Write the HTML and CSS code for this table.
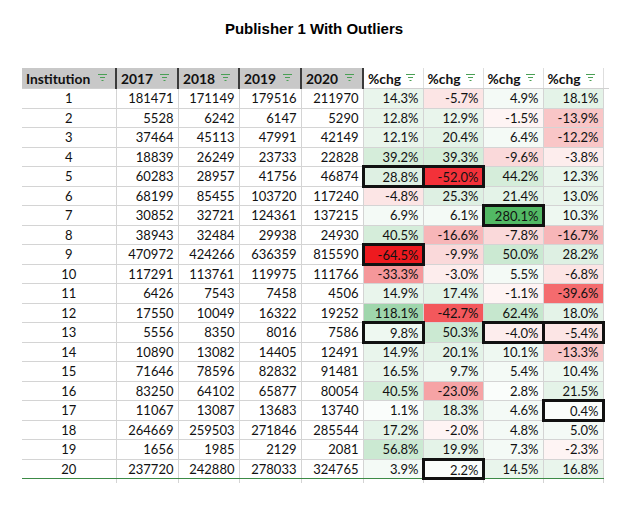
FILE: index.html
```html
<!DOCTYPE html>
<html>
<head>
<meta charset="utf-8">
<link rel="stylesheet" href="styles.css">
</head>
<body>
<h1 class="title">Publisher 1 With Outliers</h1>
<div class="sheet">
<table class="grid">
<colgroup>
<col class="c-inst"><col class="c-y17"><col class="c-y18"><col class="c-y19"><col class="c-y20">
<col class="c-p"><col class="c-p"><col class="c-p"><col class="c-p"><col class="c-edge">
</colgroup>
<thead>
<tr>
<th class="hg"><span class="hl">Institution</span><svg class="flt" viewBox="0 0 9 7"><path d="M0 0.5H9M2 3.5H7M3.5 6.5H5.5"/></svg></th>
<th class="hg"><span class="hl">2017</span><svg class="flt" viewBox="0 0 9 7"><path d="M0 0.5H9M2 3.5H7M3.5 6.5H5.5"/></svg></th>
<th class="hg"><span class="hl">2018</span><svg class="flt" viewBox="0 0 9 7"><path d="M0 0.5H9M2 3.5H7M3.5 6.5H5.5"/></svg></th>
<th class="hg"><span class="hl">2019</span><svg class="flt" viewBox="0 0 9 7"><path d="M0 0.5H9M2 3.5H7M3.5 6.5H5.5"/></svg></th>
<th class="hg"><span class="hl">2020</span><svg class="flt" viewBox="0 0 9 7"><path d="M0 0.5H9M2 3.5H7M3.5 6.5H5.5"/></svg></th>
<th class="hw"><span class="hl">%chg</span><svg class="flt" viewBox="0 0 9 7"><path d="M0 0.5H9M2 3.5H7M3.5 6.5H5.5"/></svg></th>
<th class="hw"><span class="hl">%chg</span><svg class="flt" viewBox="0 0 9 7"><path d="M0 0.5H9M2 3.5H7M3.5 6.5H5.5"/></svg></th>
<th class="hw"><span class="hl">%chg</span><svg class="flt" viewBox="0 0 9 7"><path d="M0 0.5H9M2 3.5H7M3.5 6.5H5.5"/></svg></th>
<th class="hw"><span class="hl">%chg</span><svg class="flt" viewBox="0 0 9 7"><path d="M0 0.5H9M2 3.5H7M3.5 6.5H5.5"/></svg></th>
<th class="he"><span class="edge-mark"></span></th>
</tr>
</thead>
<tbody>
<tr><td class="inst">1</td><td>181471</td><td>171149</td><td>179516</td><td>211970</td><td class="g3">14.3%</td><td class="r2">-5.7%</td><td class="g1">4.9%</td><td class="g4">18.1%</td><td class="ex"></td></tr>
<tr><td class="inst">2</td><td>5528</td><td>6242</td><td>6147</td><td>5290</td><td class="g3">12.8%</td><td class="g3">12.9%</td><td class="r0">-1.5%</td><td class="r4">-13.9%</td><td class="ex"></td></tr>
<tr><td class="inst">3</td><td>37464</td><td>45113</td><td>47991</td><td>42149</td><td class="g3">12.1%</td><td class="g4">20.4%</td><td class="g1">6.4%</td><td class="r4">-12.2%</td><td class="ex"></td></tr>
<tr><td class="inst">4</td><td>18839</td><td>26249</td><td>23733</td><td>22828</td><td class="g6">39.2%</td><td class="g6">39.3%</td><td class="r3">-9.6%</td><td class="r1">-3.8%</td><td class="ex"></td></tr>
<tr><td class="inst">5</td><td>60283</td><td>28957</td><td>41756</td><td>46874</td><td class="g5 box">28.8%</td><td class="r10 box">-52.0%</td><td class="g6">44.2%</td><td class="g3">12.3%</td><td class="ex"></td></tr>
<tr><td class="inst">6</td><td>68199</td><td>85455</td><td>103720</td><td>117240</td><td class="r2">-4.8%</td><td class="g5">25.3%</td><td class="g4">21.4%</td><td class="g3">13.0%</td><td class="ex"></td></tr>
<tr><td class="inst">7</td><td>30852</td><td>32721</td><td>124361</td><td>137215</td><td class="g1">6.9%</td><td class="g1">6.1%</td><td class="g10 box">280.1%</td><td class="g2">10.3%</td><td class="ex"></td></tr>
<tr><td class="inst">8</td><td>38943</td><td>32484</td><td>29938</td><td>24930</td><td class="g6">40.5%</td><td class="r5">-16.6%</td><td class="r3">-7.8%</td><td class="r5">-16.7%</td><td class="ex"></td></tr>
<tr><td class="inst">9</td><td>470972</td><td>424266</td><td>636359</td><td>815590</td><td class="r11 box">-64.5%</td><td class="r3">-9.9%</td><td class="g7">50.0%</td><td class="g5">28.2%</td><td class="ex"></td></tr>
<tr><td class="inst">10</td><td>117291</td><td>113761</td><td>119975</td><td>111766</td><td class="r7">-33.3%</td><td class="r1">-3.0%</td><td class="g1">5.5%</td><td class="r2">-6.8%</td><td class="ex"></td></tr>
<tr><td class="inst">11</td><td>6426</td><td>7543</td><td>7458</td><td>4506</td><td class="g3">14.9%</td><td class="g4">17.4%</td><td class="r0">-1.1%</td><td class="r8">-39.6%</td><td class="ex"></td></tr>
<tr><td class="inst">12</td><td>17550</td><td>10049</td><td>16322</td><td>19252</td><td class="g9">118.1%</td><td class="r9">-42.7%</td><td class="g8">62.4%</td><td class="g4">18.0%</td><td class="ex"></td></tr>
<tr><td class="inst">13</td><td>5556</td><td>8350</td><td>8016</td><td>7586</td><td class="g2 box">9.8%</td><td class="g7">50.3%</td><td class="r1 box">-4.0%</td><td class="r2 box">-5.4%</td><td class="ex"></td></tr>
<tr><td class="inst">14</td><td>10890</td><td>13082</td><td>14405</td><td>12491</td><td class="g3">14.9%</td><td class="g4">20.1%</td><td class="g2">10.1%</td><td class="r4">-13.3%</td><td class="ex"></td></tr>
<tr><td class="inst">15</td><td>71646</td><td>78596</td><td>82832</td><td>91481</td><td class="g3">16.5%</td><td class="g2">9.7%</td><td class="g1">5.4%</td><td class="g2">10.4%</td><td class="ex"></td></tr>
<tr><td class="inst">16</td><td>83250</td><td>64102</td><td>65877</td><td>80054</td><td class="g6">40.5%</td><td class="r6">-23.0%</td><td class="g0">2.8%</td><td class="g4">21.5%</td><td class="ex"></td></tr>
<tr><td class="inst">17</td><td>11067</td><td>13087</td><td>13683</td><td>13740</td><td class="g0">1.1%</td><td class="g4">18.3%</td><td class="g1">4.6%</td><td class="g0 box">0.4%</td><td class="ex"></td></tr>
<tr><td class="inst">18</td><td>264669</td><td>259503</td><td>271846</td><td>285544</td><td class="g4">17.2%</td><td class="r0">-2.0%</td><td class="g1">4.8%</td><td class="g1">5.0%</td><td class="ex"></td></tr>
<tr><td class="inst">19</td><td>1656</td><td>1985</td><td>2129</td><td>2081</td><td class="g7">56.8%</td><td class="g4">19.9%</td><td class="g1">7.3%</td><td class="r0">-2.3%</td><td class="ex"></td></tr>
<tr class="last"><td class="inst">20</td><td>237720</td><td>242880</td><td>278033</td><td>324765</td><td class="g1">3.9%</td><td class="g0 box">2.2%</td><td class="g3">14.5%</td><td class="g3">16.8%</td><td class="ex"></td></tr>
<tr class="tail"><td></td><td></td><td></td><td></td><td></td><td></td><td></td><td></td><td></td><td class="ex"></td></tr>
</tbody>
</table>
</div>
</body>
</html>
```

FILE: styles.css
```css
html, body {
  margin: 0;
  padding: 0;
  background: #ffffff;
}

.title {
  margin: 0;
  padding-top: 20px;
  height: 18px;
  font-family: "Liberation Sans", Arial, sans-serif;
  font-weight: bold;
  font-size: 15px;
  line-height: 18px;
  text-align: center;
  color: #000;
}

.sheet {
  padding: 30px 0 0 22px;
}

.grid {
  border-collapse: collapse;
  table-layout: fixed;
  width: 587px;
  font-family: Lato, "Open Sans", sans-serif;
  font-size: 13px;
  color: #111;
}

.c-inst { width: 94px; }
.c-y17 { width: 62px; }
.c-y18 { width: 61px; }
.c-y19 { width: 62px; }
.c-y20 { width: 62px; }
.c-p { width: 60px; }
.c-edge { width: 6px; }

.grid th {
  height: 19px;
  padding: 0 6px 0 4px;
  font-weight: bold;
  font-size: 13.8px;
  text-align: left;
  white-space: nowrap;
  overflow: hidden;
  line-height: 19px;
  vertical-align: middle;
  border-bottom: 1px solid #d0d0d0;
}

.grid th .hl {
  float: left;
  padding-top: 1px;
}

.grid th .flt {
  float: right;
  width: 9px;
  height: 7px;
  margin-top: 6px;
  margin-right: 2px;
  fill: none;
  stroke: #4a9f55;
  stroke-width: 1;
}

.hg {
  background: #c8c8c8;
  border-right: 2px solid #3b3b3b;
}

.hw {
  background: #ffffff;
  border-right: 1px solid #dedede;
  padding-left: 3px;
}

.he {
  background: #ffffff;
  border-bottom: none;
  padding: 0;
}

.edge-mark {
  display: block;
  width: 1.5px;
  height: 8px;
  margin: 1px 0 0 3px;
  background: #333;
  border-left: 1px dotted #9a9a9a;
}

.grid td {
  height: 19.5px;
  box-sizing: border-box;
  padding: 1px 4px 0 4px;
  line-height: 17px;
  text-align: right;
  white-space: nowrap;
  vertical-align: middle;
  border: 1px solid #d4d4d4;
}

.grid td:first-child {
  border-left: none;
}

.grid td.inst {
  text-align: center;
  padding-left: 0;
  padding-right: 0;
}

.grid td.ex {
  border: none;
  border-left: 1px solid #e2e2e2;
}

.grid tr.last td {
  border-bottom: 1px solid #3c8a46;
}

.grid tr.last td.ex {
  border-bottom: none;
}

.grid tr.tail td {
  height: 4px;
  padding: 0;
  border-top: 1px solid #3c8a46;
  border-bottom: none;
  line-height: 0;
}

.grid tr.tail td.ex {
  border-top: none;
}

.grid td.box {
  position: relative;
  padding-top: 3px;
  line-height: 15px;
}

.grid td.box::after {
  content: "";
  position: absolute;
  left: -2px;
  top: -2px;
  right: -2px;
  bottom: -2px;
  border: 3px solid #111;
}

.g0 { background: #fafdfb; }
.g1 { background: #f4faf6; }
.g2 { background: #eef8f1; }
.g3 { background: #e9f5ec; }
.g4 { background: #e4f3e8; }
.g5 { background: #def0e3; }
.g6 { background: #d5edda; }
.g7 { background: #cbe9d2; }
.g8 { background: #c6e7ce; }
.g9 { background: #9fd6ac; }
.g10 { background: #52b964; }

.r0 { background: #fef4f4; }
.r1 { background: #fdeded; }
.r2 { background: #fce5e5; }
.r3 { background: #fad9da; }
.r4 { background: #f9c6c7; }
.r5 { background: #f7b6b8; }
.r6 { background: #f6a3a5; }
.r7 { background: #f5979a; }
.r8 { background: #f46b6e; }
.r9 { background: #f3585c; }
.r10 { background: #f33139; }
.r11 { background: #ee1a1f; }
```
